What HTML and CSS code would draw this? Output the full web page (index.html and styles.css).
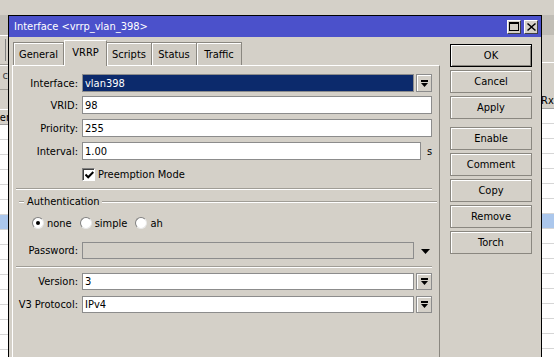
FILE: index.html
```html
<!DOCTYPE html>
<html>
<head>
<meta charset="utf-8">
<link rel="stylesheet" href="styles.css">
</head>
<body>
<div class="desktop">
  <div class="strip strip-left">
    <div class="band-top"></div>
    <div class="band-dark"></div>
    <div class="toolbar tb1"></div>
    <div class="toolbar tb2"><span class="tb-char">c</span></div>
    <div class="gap-left"></div>
    <div class="list-head lh-left"><span>er</span></div>
    <div class="rows">
      <div class="row"></div><div class="row"></div><div class="row"></div><div class="row"></div><div class="row"></div><div class="row"></div>
      <div class="row sel"></div>
      <div class="row"></div><div class="row"></div><div class="row"></div><div class="row"></div><div class="row"></div><div class="row"></div><div class="row"></div><div class="row"></div>
    </div>
  </div>
  <div class="strip strip-right">
    <div class="band-top"></div>
    <div class="band-dark"></div>
    <div class="toolbar tb1r"></div>
    <div class="toolbar tb2r"></div>
    <div class="list-head lh-right"><span>Rx</span></div>
    <div class="rows">
      <div class="row"></div><div class="row"></div><div class="row"></div><div class="row"></div><div class="row"></div><div class="row"></div><div class="row"></div>
      <div class="row sel"></div>
      <div class="row"></div><div class="row"></div><div class="row"></div><div class="row"></div><div class="row"></div><div class="row"></div><div class="row"></div><div class="row"></div>
    </div>
  </div>
</div>

<div class="window">
  <div class="titlebar">
    <span class="title">Interface &lt;vrrp_vlan_398&gt;</span>
    <div class="wctl">
      <span class="wbtn"><svg width="10" height="9" viewBox="0 0 10 9"><rect x="0.5" y="0.5" width="9" height="8" fill="none" stroke="#000"/><rect x="0" y="0" width="10" height="2" fill="#000"/></svg></span>
      <span class="wbtn"><svg width="9" height="8" viewBox="0 0 9 8"><path d="M1 0 L4.5 3 L8 0 L9 1 L5.5 4 L9 7 L8 8 L4.5 5 L1 8 L0 7 L3.5 4 L0 1 Z" fill="#000"/></svg></span>
    </div>
  </div>
  <div class="wbody">
    <div class="main">
      <div class="tabs">
        <span class="tab t-general">General</span>
        <span class="tab t-vrrp active">VRRP</span>
        <span class="tab t-other">Scripts</span>
        <span class="tab t-other">Status</span>
        <span class="tab t-other">Traffic</span>
      </div>
      <div class="panel">
        <div class="frow r-first">
          <span class="lbl">Interface:</span>
          <span class="inp selected">vlan398</span>
          <span class="ddbtn"><svg width="7" height="7" viewBox="0 0 7 7"><rect x="0" y="0" width="7" height="2" fill="#000"/><polygon points="0,3 7,3 3.5,7" fill="#000"/></svg></span>
        </div>
        <div class="frow r-next">
          <span class="lbl">VRID:</span>
          <span class="inp full">98</span>
        </div>
        <div class="frow r-next">
          <span class="lbl">Priority:</span>
          <span class="inp full">255</span>
        </div>
        <div class="frow r-next">
          <span class="lbl">Interval:</span>
          <span class="inp short">1.00</span>
          <span class="unit">s</span>
        </div>
        <div class="checkrow">
          <span class="check"><svg width="9" height="8" viewBox="0 0 9 8"><path d="M0.5 3.5 L3.2 6.3 L8.3 1" fill="none" stroke="#000" stroke-width="2"/></svg></span>
          <span>Preemption Mode</span>
        </div>
        <div class="sep sep1"></div>
        <div class="legend">
          <span class="dash"></span>
          <span class="legend-text">Authentication</span>
          <span class="legend-line"></span>
        </div>
        <div class="radios">
          <span class="radio on"><span class="dot"></span></span><span class="rlbl">none</span>
          <span class="radio"></span><span class="rlbl">simple</span>
          <span class="radio"></span><span class="rlbl">ah</span>
        </div>
        <div class="frow r-pass">
          <span class="lbl">Password:</span>
          <span class="inp disabled"></span>
          <span class="ddarrow"><svg width="9" height="5" viewBox="0 0 9 5"><polygon points="0,0 9,0 4.5,5" fill="#000"/></svg></span>
        </div>
        <div class="sep sep2"></div>
        <div class="frow r-ver">
          <span class="lbl">Version:</span>
          <span class="inp">3</span>
          <span class="ddbtn"><svg width="7" height="7" viewBox="0 0 7 7"><rect x="0" y="0" width="7" height="2" fill="#000"/><polygon points="0,3 7,3 3.5,7" fill="#000"/></svg></span>
        </div>
        <div class="frow r-v3">
          <span class="lbl">V3 Protocol:</span>
          <span class="inp">IPv4</span>
          <span class="ddbtn"><svg width="7" height="7" viewBox="0 0 7 7"><rect x="0" y="0" width="7" height="2" fill="#000"/><polygon points="0,3 7,3 3.5,7" fill="#000"/></svg></span>
        </div>
      </div>
    </div>
    <div class="buttons">
      <span class="btn default">OK</span>
      <span class="btn">Cancel</span>
      <span class="btn">Apply</span>
      <span class="btn group">Enable</span>
      <span class="btn">Comment</span>
      <span class="btn">Copy</span>
      <span class="btn">Remove</span>
      <span class="btn">Torch</span>
    </div>
  </div>
</div>
</body>
</html>
```

FILE: styles.css
```css
* { box-sizing: border-box; }
html, body { margin: 0; padding: 0; }
body {
  width: 554px;
  height: 357px;
  overflow: hidden;
  background: #d4d0c8;
  font-family: "DejaVu Sans Condensed", "Liberation Sans", sans-serif;
  font-size: 11px;
  color: #000;
  position: relative;
}

/* background application */
.desktop {
  display: flex;
  justify-content: space-between;
  height: 357px;
  overflow: hidden;
}
.strip { display: flex; flex-direction: column; overflow: hidden; }
.strip-left { width: 9px; }
.strip-right { width: 13px; }
.band-top { height: 15px; background: #d4d0c8; flex: none; }
.band-dark { height: 20px; background: #c0bdb6; flex: none; }
.toolbar { background: #d4d0c8; position: relative; flex: none; }
.tb1 { height: 30px; border-top: 1px solid #fff; border-bottom: 1px solid #a09d96; }
.tb1::after {
  content: ""; position: absolute; left: 5px; top: 3px; bottom: 3px;
  border-left: 1px solid #808080;
}
.tb2 { height: 25px; border-top: 1px solid #fff; border-bottom: 1px solid #a09d96; }
.tb-char { position: absolute; right: 1px; top: 3px; color: #444; }
.gap-left { height: 19px; flex: none; }
.tb1r { height: 28px; border-bottom: 1px solid #fff; }
.tb2r { height: 30px; }
.list-head {
  height: 16px;
  flex: none;
  background: #d4d0c8;
  border-bottom: 1px solid #a0a0a0;
  display: flex;
  align-items: center;
  white-space: nowrap;
  overflow: hidden;
}
.lh-left { justify-content: flex-end; border-top: 1px solid #fff; }
.lh-left span { margin-right: -1px; }
.rows { background: #fff; flex: 1; overflow: hidden; }
.row { height: 15px; border-bottom: 1px solid #d6d6d6; }
.row.sel { background: #abc7ec; }

/* window */
.window {
  position: absolute;
  left: 8px;
  top: 15px;
  width: 534px;
  height: 342px;
  border: 1px solid #000;
  border-bottom: none;
  background: #d4d0c8;
  overflow: hidden;
}
.titlebar {
  height: 21px;
  background: #4b51cb;
  display: flex;
  align-items: center;
  justify-content: space-between;
  padding: 0 3px 0 5px;
}
.title { color: #fff; font-size: 11px; }
.wctl { display: flex; gap: 3px; }
.wbtn {
  width: 14px;
  height: 14px;
  background: #d4d0c8;
  border: 1px solid;
  border-color: #fff #404040 #404040 #fff;
  display: flex;
  align-items: center;
  justify-content: center;
}

.wbody { display: flex; }
.main { width: 431px; }
.buttons {
  display: flex;
  flex-direction: column;
  gap: 3px;
  margin-left: 10px;
  padding-top: 7px;
  width: 82px;
}

/* tabs */
.tabs {
  height: 28px;
  display: flex;
  align-items: flex-end;
  padding-left: 4px;
  position: relative;
  z-index: 1;
}
.tab {
  height: 23px;
  display: flex;
  align-items: center;
  justify-content: center;
  border: 1px solid #8a8780;
  border-bottom: none;
  box-shadow: inset 1px 1px 0 #fff;
  background: #d0ccc4;
  padding-top: 1px;
}
.t-general { width: 51px; }
.t-vrrp { width: 43px; }
.t-other { width: 45px; border-left: none; }
.tab.active {
  height: 26px;
  background: #d4d0c8;
  border-color: #fff #8a8780 transparent #fff;
  box-shadow: none;
  margin-bottom: -1px;
  padding-bottom: 3px;
}

/* panel */
.panel {
  margin-left: 3px;
  width: 428px;
  height: 292px;
  border-top: 1px solid #fff;
  border-left: 1px solid #fff;
  border-right: 1px solid #8a8780;
  padding: 8px 0 0 4px;
}
.frow {
  display: flex;
  align-items: center;
  height: 18px;
}
.r-next { margin-top: 5px; }
.r-first + .r-next { margin-top: 4px; }
.lbl {
  width: 61px;
  text-align: right;
  margin-right: 4px;
  white-space: nowrap;
}
.inp {
  height: 18px;
  width: 332px;
  background: #fff;
  border: 1px solid #8c8c8c;
  padding-left: 2px;
  display: flex;
  align-items: center;
  white-space: nowrap;
}
.inp.full { width: 350px; }
.inp.short { width: 339px; }
.inp.selected { background: #0c2a6c; color: #fff; }
.inp.disabled { background: #d4d0c8; border-color: #8c8c8c; }
.unit { margin-left: 6px; }
.ddbtn {
  width: 16px;
  height: 18px;
  margin-left: 2px;
  border: 1px solid #8c8c8c;
  box-shadow: inset 1px 1px 0 #fff;
  background: #d4d0c8;
  display: flex;
  align-items: center;
  justify-content: center;
}
.ddarrow {
  width: 16px;
  margin-left: 3px;
  display: flex;
  justify-content: center;
  padding-top: 1px;
}

.checkrow {
  display: flex;
  align-items: center;
  height: 14px;
  margin-top: 7px;
  padding-left: 65px;
}
.check {
  width: 13px;
  height: 13px;
  background: #fff;
  border: 1px solid;
  border-color: #808080 #fff #fff #808080;
  box-shadow: inset 1px 1px 0 #404040;
  display: flex;
  align-items: center;
  justify-content: center;
  margin-right: 3px;
}
.check svg { margin-left: 1px; margin-top: 1px; }

.sep {
  height: 2px;
  width: 416px;
  border-top: 1px solid #a09d96;
  border-bottom: 1px solid #fff;
  margin-left: -1px;
}
.sep1 { margin-top: 7px; }
.sep2 { margin-top: 7px; }

.legend {
  display: flex;
  align-items: center;
  height: 13px;
  margin-top: 5px;
}
.dash {
  width: 5px;
  height: 2px;
  border-top: 1px solid #a09d96;
  border-bottom: 1px solid #fff;
  margin-left: 2px;
  margin-right: 3px;
}
.legend-line {
  flex: 1;
  height: 2px;
  margin-right: 2px;
  border-top: 1px solid #a09d96;
  border-bottom: 1px solid #fff;
  margin-left: 2px;
}
.radios {
  display: flex;
  align-items: center;
  height: 14px;
  margin-top: 8px;
  padding-left: 15px;
}
.radio {
  width: 12px;
  height: 12px;
  border-radius: 50%;
  background: #fff;
  border: 1px solid;
  border-color: #808080 #e8e8e8 #e8e8e8 #808080;
  display: flex;
  align-items: center;
  justify-content: center;
  margin-right: 3px;
}
.radio .dot { width: 4px; height: 4px; border-radius: 50%; background: #000; }
.rlbl { margin-right: 8px; }
.r-pass { margin-top: 12px; height: 17px; }
.r-pass .inp { height: 17px; }
.r-ver { margin-top: 5px; height: 17px; }
.r-ver .inp, .r-ver .ddbtn { height: 17px; }
.r-v3 { margin-top: 6px; height: 17px; }
.r-v3 .inp, .r-v3 .ddbtn { height: 17px; }

/* buttons */
.btn {
  height: 23px;
  border: 1px solid #8a8780;
  box-shadow: inset 1px 1px 0 #fff;
  display: flex;
  align-items: center;
  justify-content: center;
  padding-bottom: 1px;
}
.btn.default { border-color: #000; box-shadow: inset 1px 1px 0 #fff, inset -1px -1px 0 #8a8780; }
.btn.group { margin-top: 5px; }
```
